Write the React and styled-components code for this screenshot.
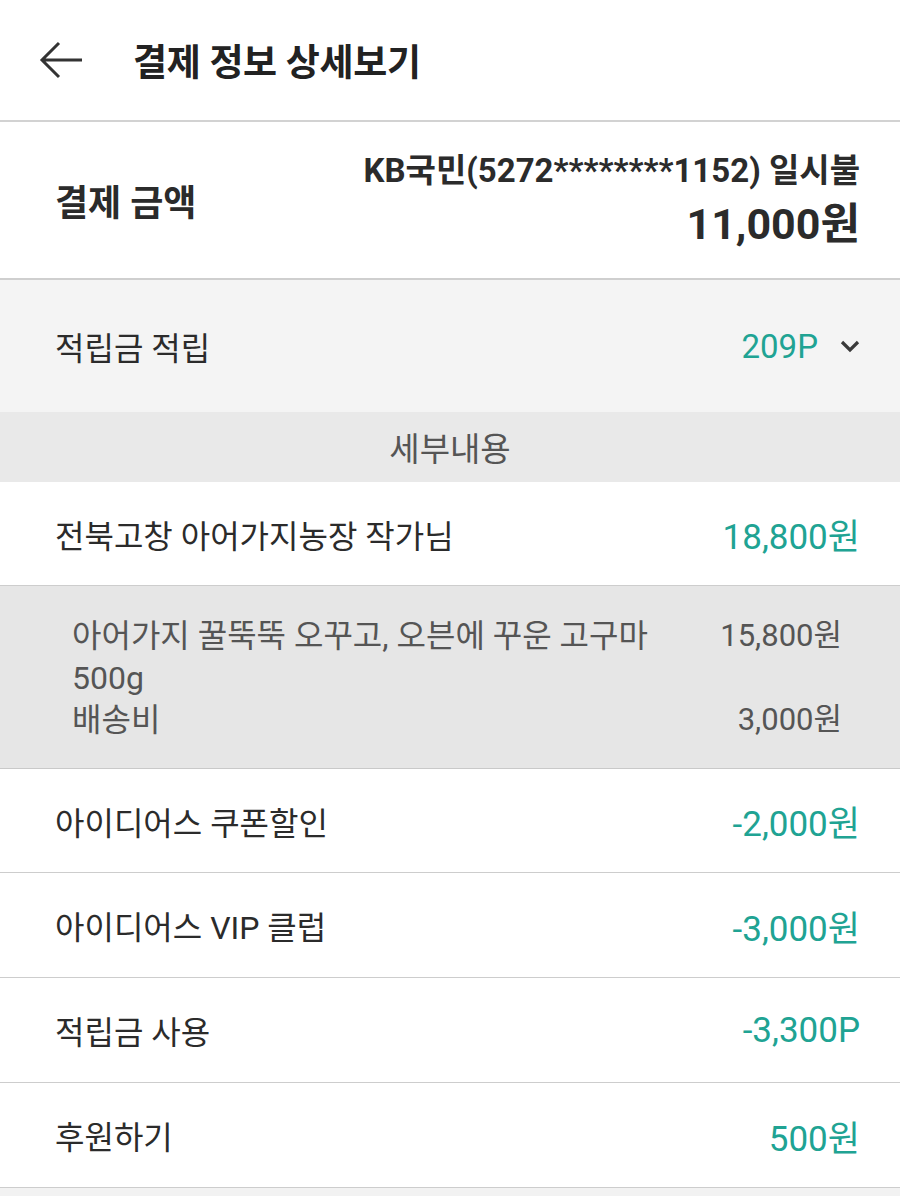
import React from "react";
import styled, { createGlobalStyle } from "styled-components";

const GlobalStyle = createGlobalStyle`
  html, body {
    margin: 0;
    padding: 0;
    background: #f2f2f2;
  }
  body {
    font-family: Roboto, "Noto Sans CJK KR", sans-serif;
    color: #2b2b2b;
  }
`;

const Page = styled.div`
  width: 900px;
  min-height: 1196px;
  background: #f2f2f2;
`;

const Header = styled.header`
  height: 122px;
  display: flex;
  align-items: center;
  background: #fff;
  border-bottom: 2px solid #d2d2d2;
  box-sizing: border-box;
  padding-left: 38px;
`;

const BackButton = styled.button`
  border: 0;
  background: none;
  padding: 0;
  width: 46px;
  height: 40px;
  display: flex;
  align-items: center;
  justify-content: center;
  margin-right: 49px;
  cursor: pointer;
`;

const Title = styled.h1`
  margin: 0;
  font-size: 37px;
  font-weight: 700;
  color: #222;
  letter-spacing: -0.3px;
`;

const AmountSection = styled.section`
  height: 158px;
  box-sizing: border-box;
  display: flex;
  align-items: center;
  justify-content: space-between;
  padding: 0 40px 0 55px;
  background: #fff;
  border-bottom: 2px solid #cfcfcf;
`;

const AmountLabel = styled.div`
  font-size: 36px;
  font-weight: 700;
  color: #2b2b2b;
`;

const AmountRight = styled.div`
  display: flex;
  flex-direction: column;
  align-items: flex-end;
  gap: 8px;
`;

const CardInfo = styled.div`
  font-size: 33px;
  line-height: 40px;
  font-weight: 700;
  color: #2b2b2b;
`;

const Total = styled.div`
  font-size: 43px;
  line-height: 50px;
  font-weight: 700;
  color: #2b2b2b;
`;

const PointRow = styled.div`
  height: 132px;
  display: flex;
  align-items: center;
  justify-content: space-between;
  padding: 0 40px 0 55px;
  background: #f4f4f4;
  font-size: 32px;
`;

const PointValue = styled.div`
  display: flex;
  align-items: center;
  gap: 22px;
  color: #20a393;
  font-size: 33px;
`;

const Band = styled.div`
  height: 70px;
  display: flex;
  align-items: center;
  justify-content: center;
  background: #e9e9e9;
  font-size: 33px;
  color: #555;
`;

const Row = styled.div`
  height: ${(p) => p.$h || 105}px;
  box-sizing: border-box;
  display: flex;
  align-items: center;
  justify-content: space-between;
  padding: 0 40px 0 55px;
  background: #fff;
  border-bottom: 1px solid #cdcdcd;
  font-size: 32px;
`;

const Label = styled.div`
  color: #2b2b2b;
`;

const Value = styled.div`
  color: ${(p) => (p.$muted ? "#555" : "#20a393")};
  font-size: ${(p) => (p.$muted ? "31px" : "35px")};
  white-space: nowrap;
`;

const Detail = styled.div`
  background: #e6e6e6;
  padding: 29px 58px 27px 72px;
  border-bottom: 1px solid #c9c9c9;
  display: flex;
  flex-direction: column;
  font-size: 32px;
  color: #555;
  line-height: 42px;
`;

const DetailLine = styled.div`
  display: flex;
  justify-content: space-between;
  gap: 40px;
`;

const ItemName = styled.div`
  max-width: 620px;
`;

const Chevron = () => (
  <svg width="20" height="14" viewBox="0 0 20 14">
    <path d="M2 3l8 8 8-8" fill="none" stroke="#3a3a3a" strokeWidth="3.2" />
  </svg>
);

const BackArrow = () => (
  <svg width="46" height="40" viewBox="0 0 46 40">
    <path
      d="M44 20H4M21 3L4 20l17 17"
      fill="none"
      stroke="#333"
      strokeWidth="3"
    />
  </svg>
);

const rows = [
  { label: "아이디어스 쿠폰할인", value: "-2,000원", h: 104 },
  { label: "아이디어스 VIP 클럽", value: "-3,000원" },
  { label: "적립금 사용", value: "-3,300P" },
  { label: "후원하기", value: "500원" },
];

export default function App() {
  return (
    <Page>
      <GlobalStyle />
      <Header>
        <BackButton>
          <BackArrow />
        </BackButton>
        <Title>결제 정보 상세보기</Title>
      </Header>

      <AmountSection>
        <AmountLabel>결제 금액</AmountLabel>
        <AmountRight>
          <CardInfo>KB국민(5272********1152) 일시불</CardInfo>
          <Total>11,000원</Total>
        </AmountRight>
      </AmountSection>

      <PointRow>
        <Label>적립금 적립</Label>
        <PointValue>
          209P
          <Chevron />
        </PointValue>
      </PointRow>

      <Band>세부내용</Band>

      <Row $h={104}>
        <Label>전북고창 아어가지농장 작가님</Label>
        <Value>18,800원</Value>
      </Row>

      <Detail>
        <DetailLine>
          <ItemName>아어가지 꿀뚝뚝 오꾸고, 오븐에 꾸운 고구마 500g</ItemName>
          <Value $muted>15,800원</Value>
        </DetailLine>
        <DetailLine>
          <ItemName>배송비</ItemName>
          <Value $muted>3,000원</Value>
        </DetailLine>
      </Detail>

      {rows.map((r) => (
        <Row key={r.label} $h={r.h}>
          <Label>{r.label}</Label>
          <Value>{r.value}</Value>
        </Row>
      ))}
    </Page>
  );
}
